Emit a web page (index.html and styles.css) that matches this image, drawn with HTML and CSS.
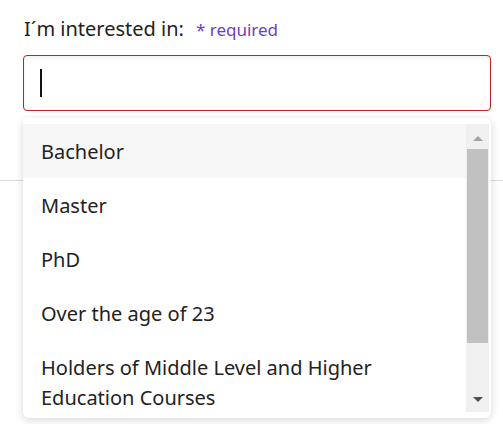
FILE: index.html
```html
<!DOCTYPE html>
<html lang="en">
<head>
<meta charset="utf-8">
<title>Form</title>
<link rel="stylesheet" href="styles.css">
</head>
<body>
<div class="form">
  <div class="field">
    <div class="label-row">
      <span class="label">I´m interested in:</span>
      <span class="req">* required</span>
    </div>
    <div class="combo">
      <div class="input"><span class="caret"></span></div>
      <div class="dropdown">
        <ul class="options">
          <li class="option active">Bachelor</li>
          <li class="option">Master</li>
          <li class="option">PhD</li>
          <li class="option">Over the age of 23</li>
          <li class="option">Holders of Middle Level and Higher Education Courses</li>
          <li class="option">International Students</li>
        </ul>
        <div class="scrollbar">
          <div class="arrow up"></div>
          <div class="track"><div class="thumb"></div></div>
          <div class="arrow down"></div>
        </div>
      </div>
    </div>
  </div>
  <div class="divider"></div>
  <div class="field second">
    <p class="policy">I have read and accept the privacy policy <a class="link">here</a></p>
  </div>
</div>
</body>
</html>
```
FILE: styles.css
```css
html, body {
  margin: 0;
  padding: 0;
  background: #fff;
}
body {
  font-family: "Noto Sans", "Open Sans", sans-serif;
  color: #222;
  overflow: hidden;
  height: 424px;
}
.form {
  padding: 15px 12px 0 23px;
}
.label-row {
  display: flex;
  align-items: baseline;
  gap: 12px;
  padding-left: 1px;
  height: 28px;
}
.label {
  font-size: 20px;
  line-height: 28px;
  color: #222;
}
.req {
  font-size: 17px;
  color: #6a40c4;
}
.combo {
  position: relative;
  margin-top: 12px;
}
.input {
  box-sizing: border-box;
  height: 56px;
  border: 1px solid #b8261c;
  border-radius: 4px;
  box-shadow: inset 0 2px 4px rgba(0,0,0,0.06);
  display: flex;
  align-items: center;
  padding-left: 16px;
}
.caret {
  width: 2px;
  height: 28px;
  background: #111;
}
.dropdown {
  position: absolute;
  top: 63px;
  left: 0;
  right: 0;
  height: 300px;
  box-sizing: border-box;
  padding: 6px 2px 6px 0;
  background: #fff;
  border-radius: 6px;
  box-shadow: 0 2px 8px rgba(0,0,0,0.16);
  display: flex;
  z-index: 5;
}
.options {
  list-style: none;
  margin: 0;
  padding: 0;
  flex: 1;
  overflow: hidden;
}
.option {
  padding: 13px 40px 11px 18px;
  font-size: 20px;
  line-height: 30px;
  color: #222;
}
.option.active {
  background: #f7f7f7;
}
.scrollbar {
  width: 23px;
  background: #f0f0f0;
  display: flex;
  flex-direction: column;
}
.arrow {
  height: 25px;
  display: flex;
  align-items: center;
  justify-content: center;
}
.arrow.up {
  padding-top: 3px;
  height: 22px;
}
.arrow::before {
  content: "";
  width: 0;
  height: 0;
  border-left: 5px solid transparent;
  border-right: 5px solid transparent;
}
.arrow.up::before {
  border-bottom: 5px solid #a3a3a3;
}
.arrow.down::before {
  border-top: 5px solid #505050;
}
.track {
  flex: 1;
  padding: 0 1px;
}
.thumb {
  height: 194px;
  background: #c1c1c1;
}
.divider {
  height: 1px;
  background: #dadada;
  margin: 69px -12px 0 -23px;
}
.second {
  padding-top: 210px;
}
.policy {
  margin: 0;
  font-size: 19px;
  line-height: 24px;
  padding-left: 18px;
}
.link {
  color: #3b1fd6;
}
```
